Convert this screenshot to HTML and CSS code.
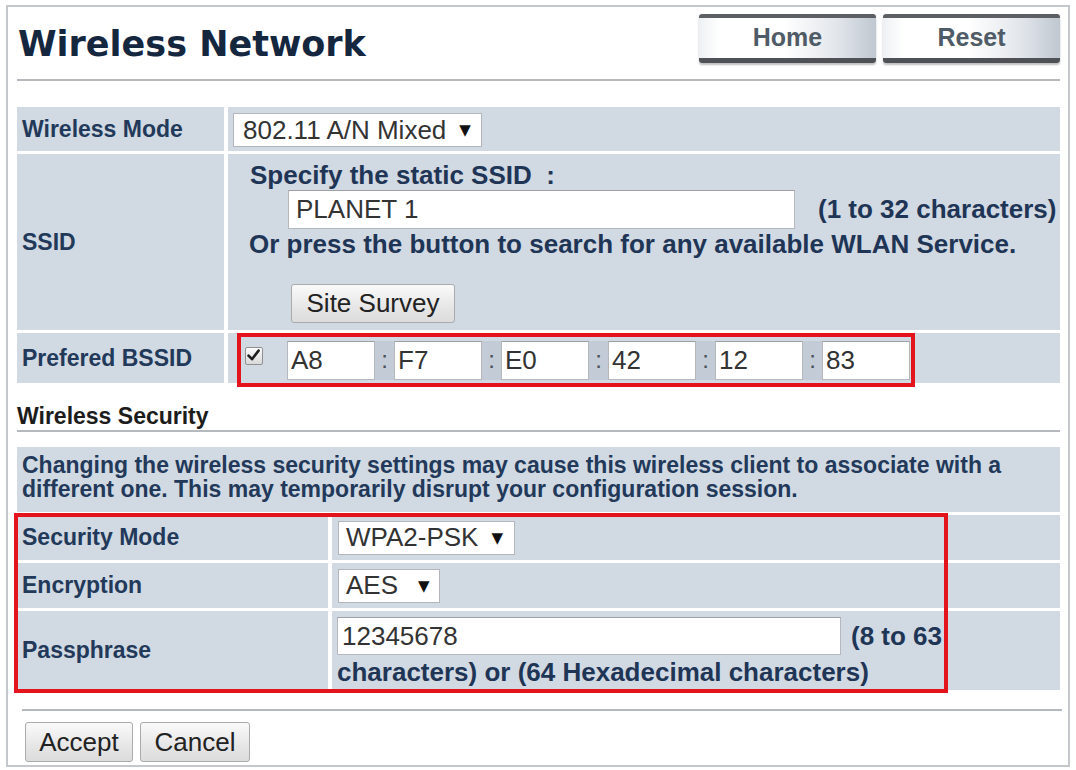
FILE: index.html
```html
<!DOCTYPE html>
<html>
<head>
<meta charset="utf-8">
<title>Wireless Network</title>
<link rel="stylesheet" href="styles.css">
</head>
<body>
<div class="frame">
  <div class="header">
    <h1 class="title">Wireless Network</h1>
    <div class="navbtns">
      <span class="navbtn">Home</span>
      <span class="navbtn">Reset</span>
    </div>
  </div>
  <div class="rule"></div>

  <div class="grid1">
    <div class="lbl">Wireless Mode</div>
    <div class="val val-mode">
      <span class="select sel-mode"><span class="seltext">802.11 A/N Mixed</span><span class="arrow">▼</span></span>
    </div>

    <div class="lbl">SSID</div>
    <div class="val val-ssid">
      <div class="ssid-l1">Specify the static SSID&nbsp; :</div>
      <div class="ssid-l2">
        <span class="input ssid-input">PLANET 1</span>
        <span class="hint">(1 to 32 characters)</span>
      </div>
      <div class="ssid-l3">Or press the button to search for any available WLAN Service.</div>
      <span class="btn survey">Site Survey</span>
    </div>

    <div class="lbl">Prefered BSSID</div>
    <div class="val val-bssid">
      <div class="redbox bssid">
        <span class="check"><svg width="17" height="17" viewBox="0 0 17 17"><path d="M3.5 8.6 L7 12.2 L13.6 3.6" fill="none" stroke="#1e1e1e" stroke-width="2.6" stroke-linecap="round" stroke-linejoin="round"/></svg></span>
        <span class="input mac">A8</span><span class="colon">:</span>
        <span class="input mac">F7</span><span class="colon">:</span>
        <span class="input mac">E0</span><span class="colon">:</span>
        <span class="input mac">42</span><span class="colon">:</span>
        <span class="input mac">12</span><span class="colon">:</span>
        <span class="input mac">83</span>
      </div>
    </div>
  </div>

  <div class="section-title">Wireless Security</div>

  <div class="grid2">
    <div class="notice">Changing the wireless security settings may cause this wireless client to associate with a different one. This may temporarily disrupt your configuration session.</div>

    <div class="lbl">Security Mode</div>
    <div class="val val-sel">
      <span class="select sel-sec"><span class="seltext">WPA2-PSK</span><span class="arrow">▼</span></span>
    </div>

    <div class="lbl">Encryption</div>
    <div class="val val-sel">
      <span class="select sel-enc"><span class="seltext">AES</span><span class="arrow arrow-wide">▼</span></span>
    </div>

    <div class="lbl">Passphrase</div>
    <div class="val val-pass">
      <div class="pass-line">
        <span class="input pass-input">12345678</span>
        <span class="pass-hint">(8 to 63</span>
      </div>
      <div class="pass-line2">characters) or (64 Hexadecimal characters)</div>
    </div>

    <div class="redbox security"></div>
  </div>

  <div class="rule rule-bottom"></div>
  <div class="actions">
    <span class="btn">Accept</span>
    <span class="btn">Cancel</span>
  </div>
</div>
</body>
</html>
```

FILE: styles.css
```css
* { box-sizing: border-box; }
html, body { margin: 0; padding: 0; background: #ffffff; }
body { font-family: "Liberation Sans", Arial, sans-serif; color: #22395a; }

.frame {
  margin: 5px 0 0 6px;
  width: 1064px;
  height: 762px;
  border: 2px solid #c4c7cb;
  padding: 0 8px 0 9px;
}

/* header */
.header { display: flex; align-items: flex-start; height: 72px; }
.title {
  margin: 17px 0 0 1px;
  font-family: "DejaVu Sans", Verdana, sans-serif;
  font-weight: bold;
  font-size: 35px;
  line-height: 40px;
  color: #15263f;
}
.navbtns { margin-left: auto; margin-top: 7px; display: flex; gap: 7px; }
.navbtn {
  width: 177px;
  height: 49px;
  display: flex; align-items: center; justify-content: center;
  border-top: 4px solid #5c6064;
  border-bottom: 5px solid #4e5256;
  border-radius: 3px;
  background: linear-gradient(to right, #eef1f4 0%, #ffffff 12%, #ffffff 48%, #e2e6eb 78%, #bfc7d0 100%);
  box-shadow: 0 2px 2px rgba(0,0,0,0.25);
  font-weight: bold;
  font-size: 25px;
  color: #4f5b66;
  padding-bottom: 2px;
}

.rule { height: 0; border-top: 2px solid #b5b9bd; }
.rule-bottom { margin: 19px -2px 0 5px; }

/* common cells */
.lbl {
  background: #d1d9e3;
  display: flex; align-items: center;
  padding-left: 5px;
  font-weight: bold;
  font-size: 23px;
  color: #22395a;
}
.val { background: #d1d9e3; }

.select {
  display: inline-flex; align-items: center;
  flex-shrink: 0;
  white-space: nowrap;
  height: 34px;
  background: #ffffff;
  border: 1px solid #b2b6ba;
  padding-left: 9px;
  font-size: 26px;
  color: #333333;
}
.arrow { font-family: "DejaVu Sans", sans-serif; font-size: 15px; margin-left: 13px; color: #111; }
.arrow-wide { margin-left: 20px; }
.input {
  display: inline-flex; align-items: center;
  background: #ffffff;
  border: 1px solid #b5b8bc;
  border-top-color: #9ea2a6;
  font-size: 26px;
  color: #333333;
}
.btn {
  display: inline-flex; align-items: center; justify-content: center;
  height: 40px;
  padding: 0 14px;
  border: 1px solid #a9abae;
  border-radius: 3px;
  background: linear-gradient(#fafafa, #e6e6e6 60%, #dcdcdc);
  font-size: 26px;
  color: #222222;
}

/* table 1 */
.grid1 {
  margin-top: 26px;
  display: grid;
  grid-template-columns: 207px 832px;
  grid-template-rows: 44px 176px 50px;
  column-gap: 4px;
  row-gap: 3px;
}
.val-mode { display: flex; align-items: center; padding-left: 5px; padding-top: 2px; }
.sel-mode { width: 249px; }

.val-ssid { padding-top: 7px; font-weight: bold; font-size: 26px; color: #1f3556; }
.ssid-l1 { margin-left: 22px; line-height: 29px; }
.ssid-l2 { margin-left: 60px; display: flex; align-items: center; gap: 23px; height: 39px; }
.ssid-input { width: 507px; height: 39px; padding-left: 7px; font-weight: normal; }
.ssid-l3 { margin-left: 21px; line-height: 30px; }
.survey { margin: 25px 0 0 63px; width: 164px; height: 39px; font-weight: normal; }

.val-bssid { padding-left: 9px; }
.redbox { border: 4px solid #e3141b; }
.bssid {
  display: flex; align-items: center;
  width: 678px; height: 54px;
  padding-left: 4px;
}
.check {
  width: 18px; height: 18px;
  border: 1px solid #8e9094;
  border-radius: 2px;
  background: linear-gradient(#fbfbfb, #d9d9d9);
  margin-right: 24px;
  margin-top: -8px;
  display: block;
}
.check svg { display: block; margin: -1px 0 0 -1px; }
.mac { width: 88px; height: 39px; padding-left: 3px; }
.colon {
  width: 19px; height: 39px;
  display: flex; align-items: center; justify-content: center;
  background: #c3ccd6;
  font-size: 24px;
  color: #4a5058;
}

/* security */
.section-title {
  margin-top: 20px;
  font-weight: bold;
  font-size: 23px;
  line-height: 26px;
  color: #1c1c1c;
  border-bottom: 2px solid #b5b9bd;
  padding-bottom: 1px;
}

.grid2 {
  position: relative;
  margin-top: 15px;
  display: grid;
  grid-template-columns: 311px 728px;
  grid-template-rows: 65px 45px 45px 79px;
  column-gap: 4px;
  row-gap: 3px;
}
.notice {
  grid-column: 1 / 3;
  background: #d1d9e3;
  padding: 6px 4px 0 5px;
  font-weight: bold;
  font-size: 23px;
  line-height: 24px;
  color: #22395a;
}
.val-sel { display: flex; align-items: center; padding-left: 6px; }
.sel-sec { width: 177px; padding-left: 7px; }
.sel-enc { width: 102px; padding-left: 7px; }
.val-pass {
  padding: 6px 8px 0 5px;
  font-weight: bold;
  font-size: 26px;
  color: #1f3556;
}
.pass-line { display: flex; align-items: center; gap: 10px; height: 38px; }
.pass-input {
  width: 504px; height: 38px;
  padding-left: 4px;
  font-weight: normal;
}
.pass-line2 { line-height: 31px; margin-top: 2px; }
.security {
  position: absolute;
  left: -3px; top: 66px;
  width: 934px; height: 180px;
}

.actions { margin: 11px 0 0 8px; display: flex; gap: 7px; }
.actions .btn { width: 108px; }
.actions .btn + .btn { width: 110px; }
```
